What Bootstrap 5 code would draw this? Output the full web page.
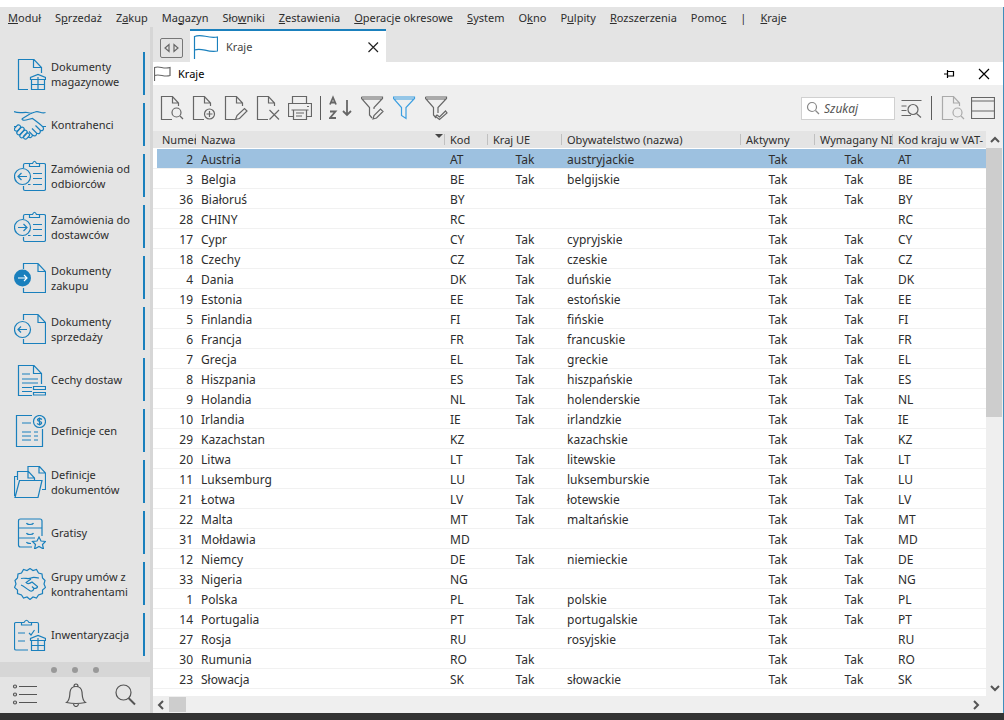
<!DOCTYPE html>
<html lang="pl">
<head>
<meta charset="utf-8">
<meta name="viewport" content="width=device-width, initial-scale=1">
<title>Kraje</title>
<link rel="stylesheet" href="https://cdn.jsdelivr.net/npm/bootstrap@5.3.0/dist/css/bootstrap.min.css">
<style>
  :root { --accent: #1a80bd; --chrome: #e4e4e4; --divider: #d6d6d6; --ink: #2d2d2d; }
  body { font-family: "Noto Sans", "Open Sans", sans-serif; font-size: 11px; line-height: 15px; color: var(--ink); background: #fff; }
  svg { display: block; fill: none; stroke: currentColor; stroke-width: 1.2; flex: none; }
  button { border: 0; background: none; padding: 0; color: inherit; }
  a { color: inherit; text-decoration: none; }
  .app-frame { min-height: 100vh; border-top: 7px solid #fff; border-bottom: 7px solid #333; }
  .app-window { background: var(--chrome); border-right: 1px solid #3f8ebc; }
  .menu-strip { height: 20px; padding: 0 8px; gap: 14px; white-space: nowrap; }
  .side-panel { width: 153px; border-right: 3px solid var(--divider); }
  .side-list { padding: 25px 5px 6px 14px; gap: 8px; }
  .side-link { height: 43px; gap: 5px; border-right: 2px solid var(--accent); }
  .side-link svg { color: var(--accent); }
  .side-dots { height: 15px; gap: 15px; background: var(--divider); }
  .side-dots i { width: 6px; height: 6px; border-radius: 50%; background: #999; }
  .side-tools { height: 36px; padding: 0 14px 0 12px; color: #555; }
  .tab-strip { height: 35px; padding-left: 7px; padding-top: 2px; }
  .tab-nav { width: 23px; height: 20px; margin: 9px 7px 0 0; border: 1px solid #777; border-radius: 2px; color: #666; }
  .doc-tab { width: 196px; height: 33px; border-top: 2px solid var(--accent); background: #fff; padding: 0 6px 0 3px; gap: 8px; color: #444; }
  .doc-tab > svg { color: var(--accent); }
  .pane-title { height: 23px; background: #fff; color: #000; gap: 7px; padding: 0 13px 0 1px; }
  .tool-row { height: 46px; background: #efefef; padding: 0 8px 0 7px; color: #666; }
  .tool-group { gap: 6px; }
  .tool-group .sep { margin: 0 3px; }
  .sep { width: 1px; height: 24px; background: #5c5c5c; }
  .faded { color: #aaa; }
  .search-box { width: 94px; height: 23px; background: #fff; border: 1px solid #d0d0d0; padding: 0 4px; gap: 4px; color: #888; }
  .search-box input { width: 100%; min-width: 0; border: 0; outline: 0; padding: 0; font-size: 12px; font-style: italic; color: #444; }
  .search-box input::placeholder { color: #555; opacity: 1; }
  .grid-view { table-layout: fixed; width: 100%; border-collapse: separate; border-spacing: 0; }
  .grid-view th, .grid-view td { padding: 0 5px; white-space: nowrap; overflow: hidden; }
  .grid-view th { height: 18px; font-weight: 400; line-height: 17px; background: var(--chrome) linear-gradient(#c0c0c0, #c0c0c0) no-repeat right 3px / 1px 11px; border-bottom: 1px solid #fff; padding-right: 0; }
  .grid-view th:first-child { padding-left: 9px; }
  .grid-view th:last-child { background-image: none; }
  .grid-view td { height: 20px; line-height: 17px; padding-top: 2px; font-size: 12px; border-bottom: 1px solid #f1f1f1; }
  .grid-view td:first-child { text-align: right; padding-right: 3px; }
  .grid-view .picked td { background: #9dc1e0; }
  .grid-view .picked td:first-child { background: linear-gradient(90deg, #fff 4px, #9dc1e0 4px); }
  .sort-mark { float: right; border: solid transparent; border-width: 4px 4px 0; border-top-color: #444; margin: 3px 2px 0 0; }
  .v-bar { width: 18px; background: #efefef; color: #555; padding: 5px 0 4px; }
  .v-bar span { width: 16px; height: 269px; background: #cdcdcd; margin: 4px 1px 0 0; }
  .h-bar { height: 17px; background: #efefef; color: #555; padding: 0 22px 0 3px; }
  .h-bar span { width: 17px; height: 15px; background: #cdcdcd; margin-left: 4px; }
  .scroll-ico { stroke-width: 2; }
</style>
</head>
<body>
<svg class="d-none" xmlns="http://www.w3.org/2000/svg">
  <symbol id="stock" viewBox="0 0 32 32"><path d="M14 31.500H4.500V1.500H20L27.500 9.500V15M19.500 1.500V9.500H27M16.500 20V19.500L24 16.500L31.500 19.500V21.500H16.500ZM17.500 22V31.500H30.500V22M24 19V31.500M17.500 26.500H30.500"/></symbol>
  <symbol id="shake" viewBox="0 0 32 32"><path d="M0 2.500C5 5 9 3 13 3.500L18 4.500M31.500 3.500C27 5 25 1.500 21 3C15 4.500 13 7 8.500 9.500C7 11 10 12 14 10.500L18.500 9.500C22 12 26 15 29 18C30.500 21 28 22.500 26 21L21.500 16.500M26 21C27 24 25 25.500 22.500 24L18 19.500M22.500 24C23 27 20.500 27.500 18.500 26L15 22.500M18.500 26C18 29 16 29 14 28M0 17.500H2.500M28.500 17.500H32"/><g><rect x="0" y="17" width="7" height="4" rx="2" transform="rotate(-48 3.500 19)"/><rect x="2" y="20" width="9" height="4" rx="2" transform="rotate(-48 6.500 22)"/><rect x="5" y="23" width="9" height="4" rx="2" transform="rotate(-48 9.500 25)"/><rect x="9" y="25" width="7" height="4" rx="2" transform="rotate(-48 12.500 27)"/></g></symbol>
  <symbol id="clip" viewBox="0 0 32 32"><path d="M16 3.500H11Q9.500 3.500 9.500 5V8M9.500 26V29Q9.500 30.500 11 30.500H30Q31.500 30.500 31.500 29V5Q31.500 3.500 30 3.500H25M15.500 6.500V3.500H18.500Q20.500-1 22.500 3.500H25.500V6.500ZM19 13.500H28M19 18.500H28M19 24.500H28M14 24.500H16.500"/><circle cx="8.500" cy="16.500" r="8"/></symbol>
  <symbol id="orderin" viewBox="0 0 32 32"><use href="#clip"/><path d="M13 16.500H4M7.500 13L4 16.500L7.500 20"/></symbol>
  <symbol id="orderout" viewBox="0 0 32 32"><use href="#clip"/><path d="M4 16.500H13M9.500 13L13 16.500L9.500 20"/></symbol>
  <symbol id="page" viewBox="0 0 32 32"><path d="M9.500 7V1.500H24L31.500 9.500V30.500H9.500V26M24 1.500V9.500H31.500"/></symbol>
  <symbol id="buy" viewBox="0 0 32 32"><use href="#page"/><circle cx="8.500" cy="16" r="8.500" fill="currentColor" stroke="none"/><path stroke="#fff" d="M4 16H13M10 13L13 16L10 19"/></symbol>
  <symbol id="sell" viewBox="0 0 32 32"><use href="#page"/><circle cx="8.500" cy="16.500" r="8"/><path d="M13 16.500H4M7 13.500L4 16.500L7 19.500"/></symbol>
  <symbol id="trait" viewBox="0 0 32 32"><path d="M18 31.500H4.500V1.500H20L27.500 9.500V20M19.500 1.500V9.500H27M8 10H16M8 15H24M8 19H24M8 23.500H18M8 27.500H18M19.500 22.500H31.500V25.500H19.500ZM19.500 28.500H31.500V31H19.500Z"/></symbol>
  <symbol id="price" viewBox="0 0 32 32"><path d="M18 .500H2.500V31.500H28.500V14M8 8H17M8 17H17M8 21H17M8 25H17M20 17H24M20 21H24M20 25H24"/><circle cx="25.500" cy="6.500" r="6"/><path d="M28 4.500Q25.500 2.500 23.500 4.500Q23.500 6 25.500 6.500Q28 7 27.500 8.500Q25.500 10.500 23 8.500M25.500 2.500V10.500"/></symbol>
  <symbol id="folder" viewBox="0 0 32 32"><path d="M.500 30V10.500H3M3.500 14V5.500H14.500L20.500 12V14M14 5.500V12H20M14 5V.500H25.500L31.500 7V23.500H28M25 .500V7H31M1 31.500L5.500 14.500H28L24 31.500Z"/></symbol>
  <symbol id="drawer" viewBox="0 0 32 32"><path d="M18 30H6.500Q4.500 30 4.500 28V4Q4.500 2 6.500 2H26Q28 2 28 4V19M4.500 11H28M4.500 21H21M12.500 6Q13 7.500 16 7.500Q19 7.500 19.500 6M12.500 16Q13 17.500 16 17.500Q19 17.500 19.500 16M12.500 25Q13 26.500 17 26.500M25 20L27 24L31.500 24.500L28.500 27.500L29.500 32L25 29.500L20.500 32L21.500 27.500L18.500 24.500L23 24Z"/></symbol>
  <symbol id="seal" viewBox="0 0 32 32"><path d="M16 .500L19 2.500L22.500 1.500L24.500 5L28 6L28.500 10L31 12.500L30 16L31.500 19.500L28.500 22L28.500 25.500L24.500 27L22.500 30L19 29L16 31.500L13 29L9.500 30L7.500 27L3.500 25.500L3.500 22L.500 19.500L2 16L1 12.500L3.500 10L4 6L7.500 5L9.500 1.500L13 2.500ZM7 10.500C11 9.500 14 11.500 17 10C20 8.500 22 10 25 10M17 11L12 14.500C14 17 16 15 18 14L23.500 18.500C23.500 20 21 20.500 20 20.500C19 23.500 17 23.500 15.500 22.500C12 20.500 10 18 7 17M18 18.500L20 20.500"/></symbol>
  <symbol id="inventory" viewBox="0 0 32 32"><path d="M7 3.500H2Q.500 3.500 .500 5V29.500Q.500 31 2 31H14M18 3.500H23Q24.500 3.500 24.500 5V14M7.500 6V3.500H10Q12.500-1 15 3.500H17.500V6ZM4 14H11M4 22H11M15 14L17 16L20.500 11M16.500 20V19.500L24 16.500L31.500 19.500V21.500H16.500ZM17.500 22V31.500H30.500V22M24 19V31.500M17.500 26.500H30.500"/></symbol>
  <symbol id="sheet" viewBox="0 0 24 26"><path d="M12 24.500H1.500V1.500H12.500L18.500 8V11M12.500 1.500V8H18.500"/></symbol>
</svg>

<div class="app-frame d-flex flex-column">
<div class="app-window flex-grow-1 d-flex flex-column">
  <nav class="menu-strip d-flex align-items-center" aria-label="Menu główne">
    <a href="#"><u>M</u>oduł</a><a href="#">S<u>p</u>rzedaż</a><a href="#">Z<u>a</u>kup</a><a href="#">Ma<u>g</u>azyn</a><a href="#">Sło<u>w</u>niki</a><a href="#"><u>Z</u>estawienia</a><a href="#"><u>O</u>peracje okresowe</a><a href="#"><u>S</u>ystem</a><a href="#">O<u>k</u>no</a><a href="#">P<u>u</u>lpity</a><a href="#"><u>R</u>ozszerzenia</a><a href="#">Pomo<u>c</u></a><span>|</span><a href="#"><u>K</u>raje</a>
  </nav>
  <div class="d-flex flex-grow-1">
    <aside class="side-panel d-flex flex-column flex-shrink-0">
      <nav class="side-list d-flex flex-column flex-grow-1" aria-label="Skróty">
        <a class="side-link d-flex align-items-center" href="#"><svg width="32" height="32"><use href="#stock"/></svg><span>Dokumenty<br>magazynowe</span></a>
        <a class="side-link d-flex align-items-center" href="#"><svg width="32" height="32"><use href="#shake"/></svg><span>Kontrahenci</span></a>
        <a class="side-link d-flex align-items-center" href="#"><svg width="32" height="32"><use href="#orderin"/></svg><span>Zamówienia od<br>odbiorców</span></a>
        <a class="side-link d-flex align-items-center" href="#"><svg width="32" height="32"><use href="#orderout"/></svg><span>Zamówienia do<br>dostawców</span></a>
        <a class="side-link d-flex align-items-center" href="#"><svg width="32" height="32"><use href="#buy"/></svg><span>Dokumenty<br>zakupu</span></a>
        <a class="side-link d-flex align-items-center" href="#"><svg width="32" height="32"><use href="#sell"/></svg><span>Dokumenty<br>sprzedaży</span></a>
        <a class="side-link d-flex align-items-center" href="#"><svg width="32" height="32"><use href="#trait"/></svg><span>Cechy dostaw</span></a>
        <a class="side-link d-flex align-items-center" href="#"><svg width="32" height="32"><use href="#price"/></svg><span>Definicje cen</span></a>
        <a class="side-link d-flex align-items-center" href="#"><svg width="32" height="32"><use href="#folder"/></svg><span>Definicje<br>dokumentów</span></a>
        <a class="side-link d-flex align-items-center" href="#"><svg width="32" height="32"><use href="#drawer"/></svg><span>Gratisy</span></a>
        <a class="side-link d-flex align-items-center" href="#"><svg width="32" height="32"><use href="#seal"/></svg><span>Grupy umów z<br>kontrahentami</span></a>
        <a class="side-link d-flex align-items-center" href="#"><svg width="32" height="32"><use href="#inventory"/></svg><span>Inwentaryzacja</span></a>
      </nav>
      <div class="side-dots d-flex align-items-center justify-content-center"><i></i><i></i><i></i></div>
      <div class="side-tools d-flex align-items-center justify-content-between">
        <button type="button" aria-label="Lista"><svg width="26" height="24"><path d="M7 3.500H25M7 11.500H25M7 19.500H25"/><circle cx="3" cy="3.500" r="1.500"/><circle cx="3" cy="11.500" r="1.500"/><circle cx="3" cy="19.500" r="1.500"/></svg></button>
        <button type="button" aria-label="Powiadomienia"><svg width="22" height="24"><path d="M1.500 19.500C5 17 4.500 14 5 9C5.500 5 8 3.500 11 3.500C14 3.500 16.500 5 17 9C17.500 14 17 17 20.500 19.500Q11 21.500 1.500 19.500ZM9 3.500Q9 1 11 1Q13 1 13 3.500M8.500 21Q9 23.500 11 23.500Q13 23.500 13.500 21"/></svg></button>
        <button type="button" aria-label="Szukaj"><svg width="22" height="24"><circle cx="9.500" cy="9.500" r="7.500"/><path d="M14.500 15L21 21.500" stroke-width="2"/></svg></button>
      </div>
    </aside>

    <main class="d-flex flex-column flex-grow-1">
      <div class="tab-strip d-flex">
        <button class="tab-nav d-flex align-items-center justify-content-center" type="button" aria-label="Przełącz kartę"><svg width="17" height="10"><path d="M6 1.500V8.500L2 5ZM11 1.500V8.500L15 5Z"/></svg></button>
        <div class="doc-tab d-flex align-items-center"><svg width="25" height="26"><path d="M1.500 25V2.500C9-1 14 5 24.500 3V17C14 19 9 13 1.500 16"/></svg><span class="flex-grow-1">Kraje</span><button type="button" aria-label="Zamknij kartę"><svg width="13" height="12" color="#222"><path d="M1.500 1.500L11 11M11 1.500L1.500 11"/></svg></button></div>
      </div>
      <div class="pane-title d-flex align-items-center">
        <svg width="17" height="17" color="#666"><path d="M.500 16V2.500C6 .500 9 4.500 16 2.500V10.500C10 12.500 6 8.500 .500 10.500"/></svg><span class="flex-grow-1">Kraje</span>
        <button class="me-3" type="button" aria-label="Przypnij"><svg width="12" height="10"><path d="M1 5H4M4.500 1V9M4.500 2.500H10.500V7H4.500"/></svg></button>
        <button type="button" aria-label="Zamknij"><svg width="12" height="12"><path d="M1 1L11 11M11 1L1 11"/></svg></button>
      </div>
      <div class="tool-row d-flex align-items-center" role="toolbar">
        <div class="d-flex align-items-center gap-2">
          <button type="button" aria-label="Pokaż"><svg width="24" height="26"><use href="#sheet" width="24" height="26"/><circle cx="16.500" cy="17.500" r="4.500"/><path d="M20 21L23 24"/></svg></button>
          <button type="button" aria-label="Dodaj"><svg width="24" height="26"><use href="#sheet" width="24" height="26"/><circle cx="17.500" cy="19" r="5"/><path d="M14.500 19H20.500M17.500 16V22"/></svg></button>
          <button type="button" aria-label="Popraw"><svg width="24" height="26"><use href="#sheet" width="24" height="26"/><path d="M11.500 24.500L13 20.500L20.500 13.500L23 16L15.500 23.500Z"/></svg></button>
          <button type="button" aria-label="Usuń"><svg width="24" height="26"><use href="#sheet" width="24" height="26"/><path d="M13.500 15L23 24.500M23 15L13.500 24.500"/></svg></button>
          <button type="button" aria-label="Drukuj"><svg width="24" height="26"><path d="M4.500 8.500V1.500H18.500V8.500M5 21.500H.500V8.500H23.500V21.500H19M5.500 15H18.500V24.500H5.500ZM8 18H16M8 21H14M19 11.500H21M3.500 15H20.500"/></svg></button>
          <span class="sep"></span>
          <button type="button" aria-label="Sortuj"><svg width="24" height="26"><path stroke-width="1.800" d="M1 9.500L4 2.500L7 9.500M2 7.500H6M1 16.500H6.500L1 23H7M18 5V20M14 16L18 20L22 16"/></svg></button>
          <button type="button" aria-label="Edytuj filtr"><svg width="24" height="26"><path d="M.500 2H21.500V3.500L13 12.500V14M.500 2V3.500L8.500 12.500V20L11 23M1 4H21M12 24L13 20.500L19.500 14L22 16.500L15.500 23Z"/></svg></button>
          <button type="button" aria-label="Filtruj"><svg width="24" height="26" color="#3b9ee0"><path d="M.500 2H21.500V3.500L13 12.500V23.500L8.500 20.500V12.500L.500 3.500ZM1 4H21"/></svg></button>
          <button type="button" aria-label="Zastosuj filtr"><svg width="24" height="26"><path d="M.500 2H21.500V3.500L13 12.500V18M.500 2V3.500L8.500 12.500V20L11 23M1 4H21M12 20L14.500 22L20.500 16L22 18L14.500 24.500L10.500 21.500Z"/></svg></button>
        </div>
        <div class="tool-group d-flex align-items-center ms-auto">
          <label class="search-box d-flex align-items-center"><svg width="14" height="14"><circle cx="6" cy="6" r="4.500"/><path d="M9.500 9.500L13 13"/></svg><input type="text" placeholder="Szukaj" aria-label="Szukaj"></label>
          <button type="button" aria-label="Szukaj zaawansowane"><svg width="21" height="26"><path d="M.500 5.500H20.500M.500 11H5.500M.500 15.500H5.500M.500 20.500H10"/><circle cx="12" cy="14.500" r="5"/><path d="M15.500 18.500L20 22.500"/></svg></button>
          <span class="sep"></span>
          <button class="faded" type="button" aria-label="Podgląd"><svg width="24" height="26"><use href="#sheet" width="24" height="26"/><circle cx="16.500" cy="17.500" r="4.500"/><path d="M20 21L23 24"/></svg></button>
          <button type="button" aria-label="Układ okna"><svg width="24" height="26"><path d="M.500 2.500H23.500V23.500H.500ZM.500 6H23.500M.500 16H23.500"/></svg></button>
        </div>
      </div>
      <div class="d-flex flex-grow-1 bg-white">
        <div class="flex-grow-1">
          <table class="grid-view">
            <colgroup><col width="43"><col width="249"><col width="43"><col width="74"><col width="179"><col width="74"><col width="78"><col></colgroup>
            <thead><tr><th>Numer</th><th>Nazwa<span class="sort-mark"></span></th><th>Kod</th><th>Kraj UE</th><th>Obywatelstwo (nazwa)</th><th>Aktywny</th><th>Wymagany NIP</th><th>Kod kraju w VAT-</th></tr></thead>
            <tbody id="countries"></tbody>
          </table>
        </div>
        <div class="v-bar d-flex flex-column align-items-center" aria-hidden="true"><svg class="scroll-ico" width="10" height="8"><path d="M1 6L5 2L9 6"/></svg><span></span><svg class="scroll-ico mt-auto" width="10" height="8"><path d="M1 2L5 6L9 2"/></svg></div>
      </div>
      <div class="h-bar d-flex align-items-center" aria-hidden="true"><svg class="scroll-ico" width="9" height="10"><path d="M7 1L3 5L7 9"/></svg><span></span><svg class="scroll-ico ms-auto" width="9" height="10"><path d="M2 1L6 5L2 9"/></svg></div>
    </main>
  </div>
</div>
</div>
<script src="https://cdn.jsdelivr.net/npm/bootstrap@5.3.0/dist/js/bootstrap.bundle.min.js"></script>
<script>
  // numer, nazwa, kod, kraj UE, obywatelstwo, wymagany NIP
  const countries = [
    [2, 'Austria', 'AT', 1, 'austryjackie', 1], [3, 'Belgia', 'BE', 1, 'belgijskie', 1],
    [36, 'Białoruś', 'BY', 0, '', 1], [28, 'CHINY', 'RC', 0, '', 0],
    [17, 'Cypr', 'CY', 1, 'cypryjskie', 1], [18, 'Czechy', 'CZ', 1, 'czeskie', 1],
    [4, 'Dania', 'DK', 1, 'duńskie', 1], [19, 'Estonia', 'EE', 1, 'estońskie', 1],
    [5, 'Finlandia', 'FI', 1, 'fińskie', 1], [6, 'Francja', 'FR', 1, 'francuskie', 1],
    [7, 'Grecja', 'EL', 1, 'greckie', 1], [8, 'Hiszpania', 'ES', 1, 'hiszpańskie', 1],
    [9, 'Holandia', 'NL', 1, 'holenderskie', 1], [10, 'Irlandia', 'IE', 1, 'irlandzkie', 1],
    [29, 'Kazachstan', 'KZ', 0, 'kazachskie', 1], [20, 'Litwa', 'LT', 1, 'litewskie', 1],
    [11, 'Luksemburg', 'LU', 1, 'luksemburskie', 1], [21, 'Łotwa', 'LV', 1, 'łotewskie', 1],
    [22, 'Malta', 'MT', 1, 'maltańskie', 1], [31, 'Mołdawia', 'MD', 0, '', 1],
    [12, 'Niemcy', 'DE', 1, 'niemieckie', 1], [33, 'Nigeria', 'NG', 0, '', 1],
    [1, 'Polska', 'PL', 1, 'polskie', 1], [14, 'Portugalia', 'PT', 1, 'portugalskie', 1],
    [27, 'Rosja', 'RU', 0, 'rosyjskie', 0], [30, 'Rumunia', 'RO', 1, '', 1],
    [23, 'Słowacja', 'SK', 1, 'słowackie', 1]
  ];
  const yes = flag => `<td class="text-center">${flag ? 'Tak' : ''}</td>`;
  document.getElementById('countries').innerHTML = countries.map(([no, name, code, eu, people, nip], i) =>
    `<tr${i ? '' : ' class="picked"'}><td>${no}</td><td>${name}</td><td>${code}</td>${yes(eu)}<td>${people}</td>${yes(1)}${yes(nip)}<td>${code}</td></tr>`).join('');
</script>
</body>
</html>
